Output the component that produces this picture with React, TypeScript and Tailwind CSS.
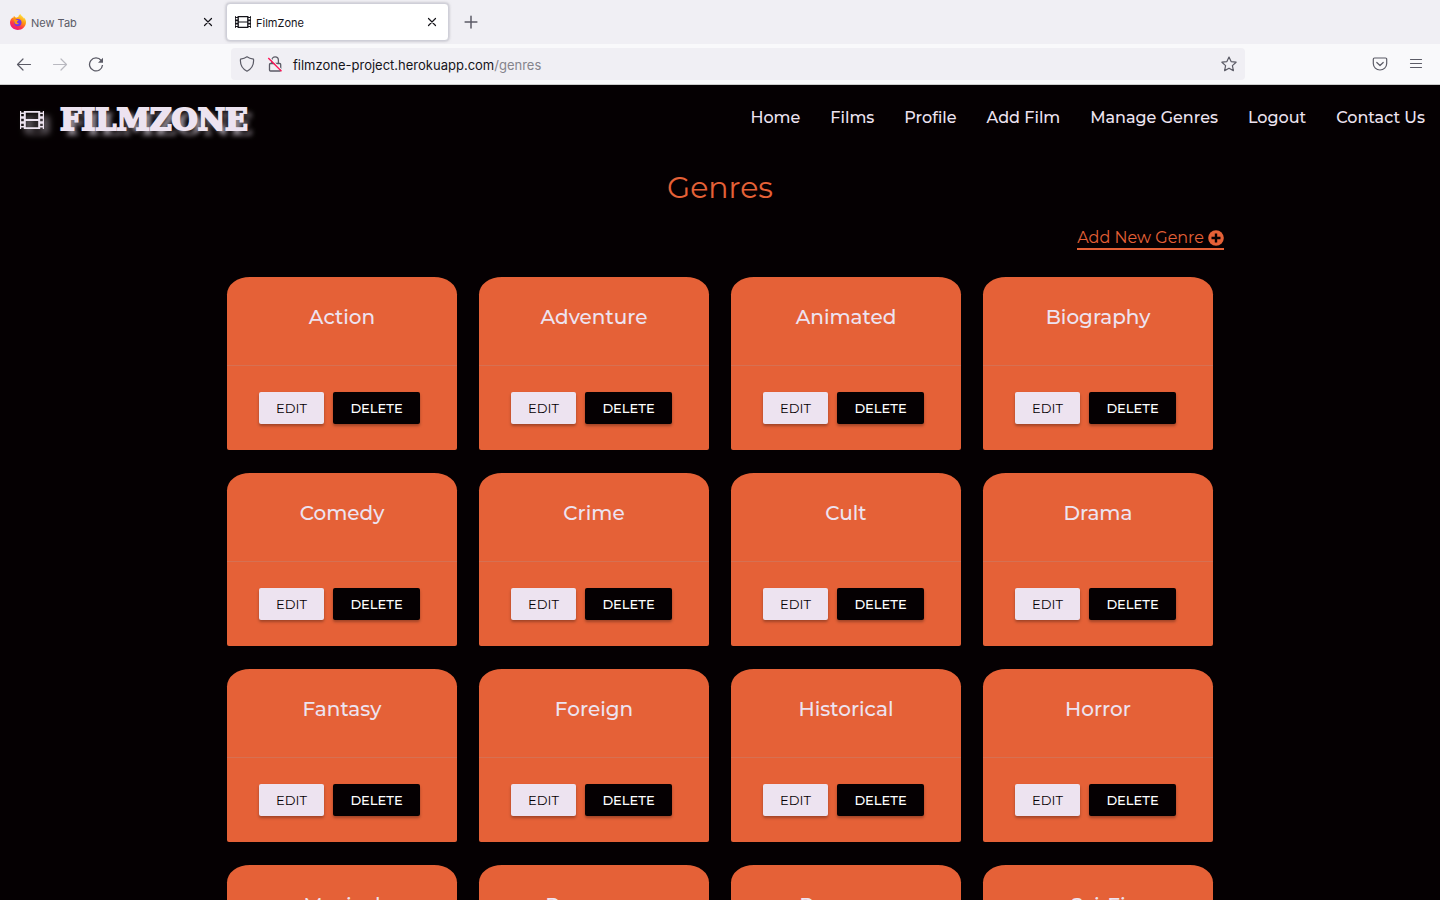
import React from "react";

const genres = ["Action", "Adventure", "Animated", "Biography", "Comedy", "Crime", "Cult", "Drama", "Fantasy", "Foreign", "Historical", "Horror", "Musical", "Romance", "Romcom", "Sci-Fi"];
const links = ["Home", "Films", "Profile", "Add Film", "Manage Genres", "Logout", "Contact Us"];

function Film({ className }: { className: string }) {
  return (
    <svg viewBox="0 0 24 18" className={className} fill="currentColor" aria-hidden="true">
      <path fillRule="evenodd" d="M0 0h1.200v1.500h2.600V0h16.400v1.500h2.600V0H24v18h-1.200v-1.500h-2.600V18H3.800v-1.500H1.200V18H0zM1.200 3v2.300h2.600V3zm0 4.800v2.400h2.600V7.800zm0 4.900V15h2.600v-2.300zM20.200 3v2.300h2.600V3zm0 4.800v2.400h2.600V7.800zm0 4.900V15h2.600v-2.300zM5.800 1.800v6.300h12.400V1.800zm0 8.100v6.300h12.400V9.900z" />
    </svg>
  );
}

function Firefox() {
  return (
    <svg viewBox="0 0 16 16" className="size-4" aria-hidden="true">
      <defs>
        <linearGradient id="flame" x1="0.8" y1="0" x2="0.25" y2="1">
          <stop offset="0" stopColor="#fff44f" />
          <stop offset="0.4" stopColor="#ff980e" />
          <stop offset="0.7" stopColor="#ff3647" />
          <stop offset="1" stopColor="#e31587" />
        </linearGradient>
      </defs>
      <path fill="url(#flame)" d="M15.400 5.500c-.4-.9-1.100-1.700-1.700-2 .4.700.6 1.300.6 1.600C13.400 2.900 11.500 2.300 10.300 0c-1.300.8-1.900 2.200-2 3.100-.8.100-1.500.3-2.100.6-1-.3-1.700-.9-2-1.700-.7.500-1 1.500-.9 2.300L2.400 3.500C1.300 4.500 0 6.300 0 8.600 0 12.700 3.500 16 7.800 16c4.500 0 8.200-3.500 8.200-8 0-.9-.2-1.700-.6-2.500z" />
      <circle cx="7.800" cy="8.600" r="3.700" fill="#7139e8" />
      <path fill="#ff980e" d="M3.400 5.500c1.400-.7 2.700-.1 3.300.6h1.800c-.1.800-1.400 1-1.500 1.600-.2 1 .9 1.800 2 1.300-.6 1.300-2.700 1.800-4.100.6-.6-1.300-.3-2.100-1.500-4.100z" />
    </svg>
  );
}

function Line({ d, className }: { d: string; className: string }) {
  return (
    <svg viewBox="0 0 16 16" className={className} fill="none" stroke="currentColor" strokeWidth="1.200" strokeLinecap="round" strokeLinejoin="round" aria-hidden="true">
      <path d={d} />
    </svg>
  );
}

const CROSS = "M4.500 4.500l7 7M11.500 4.500l-7 7";

function Browser() {
  return (
    <div className="font-['Inter',sans-serif] text-[#15141a]">
      <div className="flex h-11 items-center bg-[#f0eff4]">
        <div className="flex h-9 w-[226px] items-center px-2.5 text-[11px] text-[#5b5b66]">
          <Firefox />
          <span className="ml-[5px] flex-1 pt-0.5">New Tab</span>
          <button aria-label="Close New Tab" className="text-[#15141a]"><Line d={CROSS} className="size-4" /></button>
        </div>
        <div className="flex h-[38px] w-[223px] items-center rounded border border-[#cfcfd8] bg-white px-2 text-[11px] shadow-[0_0_3px_rgba(128,128,142,0.6)]">
          <Film className="h-3 w-4" />
          <span className="ml-[5px] flex-1 pt-0.5">FilmZone</span>
          <button aria-label="Close FilmZone"><Line d={CROSS} className="size-4" /></button>
        </div>
        <button aria-label="Open a new tab" className="ml-3 text-[#5b5b66]"><Line d="M8 3.300v9.400M3.300 8h9.400" className="size-5" /></button>
      </div>
      <div className="flex h-[41px] items-center border-b border-[#cccccc] bg-[#f9f9fb] text-[#5b5b66]">
        <div className="flex w-[231px] shrink-0 gap-5 pl-4">
          <button aria-label="Back"><Line d="M14.500 8.500H1.500M7 3L1.500 8.500L7 14" className="size-4" /></button>
          <button aria-label="Forward" className="text-[#b9b9c0]"><Line d="M1.500 8.500h13M9 3L14.500 8.500L9 14" className="size-4" /></button>
          <button aria-label="Reload">
            <svg viewBox="0 0 16 16" className="size-4" fill="none" stroke="currentColor" strokeWidth="1.300" aria-hidden="true">
              <path d="M13.200 4.500A6.500 6.500 0 1 0 14.500 9" />
              <path d="M15 1.800v5h-5z" fill="currentColor" stroke="none" />
            </svg>
          </button>
        </div>
        <div className="flex h-8 min-w-0 flex-1 items-center rounded bg-[#f0eff4] px-2">
          <Line d="M8 .8c2 1.500 4 2 6.500 2.300C15 8 13.500 12.500 8 15.200C2.500 12.500 1 8 1.500 3.100C4 2.800 6 2.300 8 .8z" className="size-4" />
          <svg viewBox="0 0 16 16" className="ml-3 size-4" fill="none" stroke="currentColor" strokeWidth="1.300" aria-hidden="true">
            <path d="M4.800 7V4.200a3.300 3.300 0 0 1 6.600 0V7M3.500 7.500h9.200a1 1 0 0 1 1 1v5.500a1 1 0 0 1-1 1H3.500a1 1 0 0 1-1-1V8.500a1 1 0 0 1 1-1z" />
            <path d="M2.200 1.300L15.200 14.300" stroke="#f0eff4" strokeWidth="1.200" />
            <path d="M1.300 2L14.500 15.200" stroke="#ff0f54" />
          </svg>
          <a href="#genres" className="ml-2.5 flex-1 pt-[3px] text-[13px] text-[#15141a]">filmzone-project.herokuapp.com<span className="text-[#85848c]">/genres</span></a>
          <button aria-label="Bookmark this page"><Line d="M8 1l2.100 4.600 5 .6-3.700 3.400 1 5L8 12.200l-4.400 2.400 1-5L.9 6.200l5-.6z" className="size-4" /></button>
        </div>
        <div className="flex w-[195px] shrink-0 justify-end gap-5 pr-4">
          <button aria-label="Save to Pocket"><Line d="M2.500 2h11a1.200 1.200 0 0 1 1.200 1.200V7.500a6.700 6.500 0 0 1-13.400 0V3.200A1.200 1.200 0 0 1 2.500 2zM4.800 6.500L8 9.500l3.200-3" className="size-4" /></button>
          <button aria-label="Open menu"><Line d="M2.500 3.500h11M2.500 7.500h11M2.500 11.500h11" className="size-4" /></button>
        </div>
      </div>
    </div>
  );
}

function GenreCard({ name }: { name: string }) {
  return (
    <article className="h-[173px] rounded-t-[10%] rounded-b-xs bg-[#e56137]">
      <h2 className="h-[88px] pt-6 text-center text-[20px] leading-8 font-medium text-[#ede3f0]">{name}</h2>
      <div className="flex gap-[9px] border-t border-[#d67052] px-8 pt-[26px] text-[13px]">
        <button className="h-8 w-[65px] rounded-xs bg-[#ede3f0] pt-px text-[#050002] shadow-[0_2px_3px_rgba(0,0,0,0.3)]">EDIT</button>
        <button className="h-8 w-[87px] rounded-xs bg-[#050002] pt-px font-medium text-white shadow-[0_2px_3px_rgba(0,0,0,0.3)]">DELETE</button>
      </div>
    </article>
  );
}

export default function App() {
  return (
    <div className="h-screen overflow-hidden bg-[#050002] font-['Montserrat','Inter',sans-serif]">
      <Browser />
      <header className="flex h-[66px] items-center justify-between pr-[15px] pl-5 text-[#ede3f0]">
        <a href="#home" className="flex items-center gap-4">
          <Film className="mt-1 h-[18px] w-6 drop-shadow-[5px_5px_3px_rgba(237,227,240,0.6)]" />
          <span className="pt-1 font-['DejaVu_Serif',serif] text-[30px] leading-none font-bold [-webkit-text-stroke:2px_#ede3f0] [text-shadow:5px_5px_5px_rgba(237,227,240,0.7)]">FILMZONE</span>
        </a>
        <nav className="flex gap-[30px] text-[16px] font-medium">
          {links.map((link) => <a key={link} href="#menu">{link}</a>)}
        </nav>
      </header>
      <main>
        <h1 className="pt-[15px] text-center text-[30px] leading-11 text-[#e56137]">Genres</h1>
        <div className="mx-auto flex w-[70%] justify-end pt-[17px]">
          <a href="#add" className="flex items-center gap-1 border-b-2 border-[#e56137] text-[16px] leading-[21px] text-[#e56137]">
            Add New Genre
            <svg viewBox="0 0 16 16" className="size-4" aria-hidden="true">
              <circle cx="8" cy="8" r="7.800" fill="currentColor" />
              <path d="M8 3.500v9M3.500 8h9" stroke="#050002" strokeWidth="2.400" />
            </svg>
          </a>
        </div>
        <div className="mx-auto grid w-[986px] max-w-full grid-cols-4 gap-x-[22px] gap-y-[23px] pt-[27px]">
          {genres.map((name) => <GenreCard key={name} name={name} />)}
        </div>
      </main>
    </div>
  );
}
